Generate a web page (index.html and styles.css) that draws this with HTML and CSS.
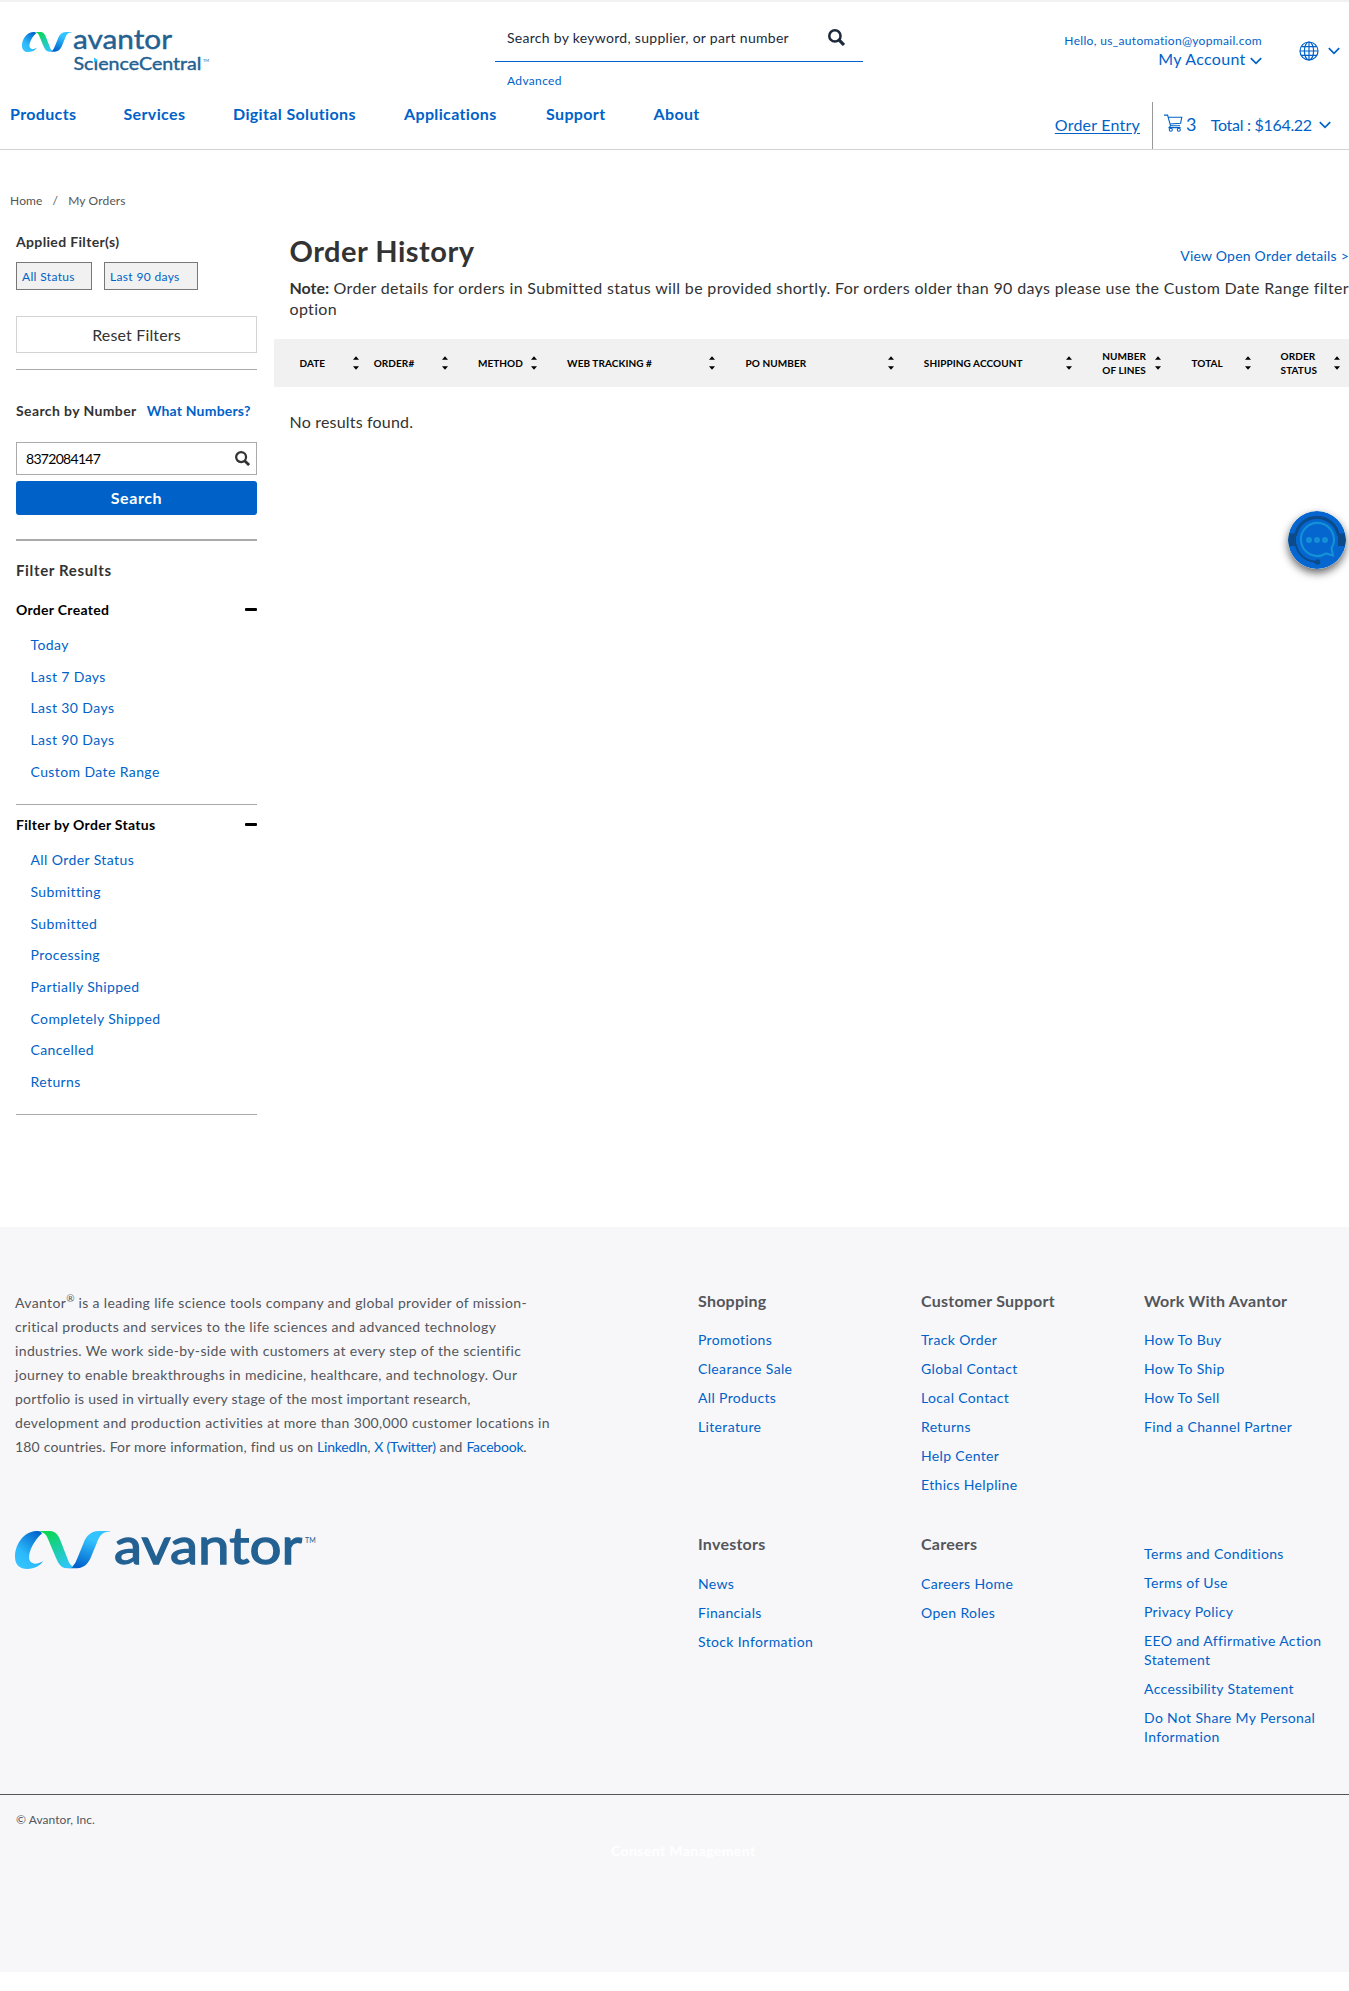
FILE: index.html
```
<!DOCTYPE html>
<html lang="en">
<head>
<meta charset="utf-8">
<title>Order History</title>
<link rel="stylesheet" href="styles.css">
</head>
<body>
<svg class="defs" width="0" height="0" aria-hidden="true">
  <defs>
    <linearGradient id="g-left" x1="0.8" y1="0" x2="0.2" y2="1"><stop offset="0" stop-color="#0062cc"/><stop offset=".65" stop-color="#2cb9fb"/><stop offset="1" stop-color="#36c6ff"/></linearGradient>
    <linearGradient id="g-mid" x1="0.2" y1="0" x2="0.8" y2="1"><stop offset=".1" stop-color="#0bd65a"/><stop offset="1" stop-color="#2fc5ff"/></linearGradient>
    <linearGradient id="g-right" x1="0.3" y1="1" x2="0.7" y2="0"><stop offset="0" stop-color="#0060cb"/><stop offset=".75" stop-color="#33c3ff"/></linearGradient>
    <symbol id="swirl" viewBox="0 0 95 38">
      <path fill="url(#g-right)" d="M95 0H84C75 0 71 6 69 11L62 28C60 33 58 36 54 37.3H62C70 37 74 31 76 26L83 9C85 4 88 1 95 .5Z"/>
      <path fill="url(#g-mid)" d="M22 0H35C41 0 44 5 46 11L53 29C54 32 56 35 58.500 35.500C57 37 54 37.300 52 37.300C45 37 43 31 41 27L33 8C31 3 29 1 22 0Z"/>
      <path fill="url(#g-left)" d="M27 2.500C26 .5 24 0 21 0C8 1 0 14 0 26C0 34 5 38 12 38C20 38 26 34 28 30C24 32.500 20 33.500 17.500 32C10 29 16 12 27 2.500Z"/>
    </symbol>
    <symbol id="chevron" viewBox="0 0 12 8"><path d="M.8 1.200 6 6.400 11.200 1.200" fill="none" stroke="currentColor" stroke-width="1.700"/></symbol>
    <symbol id="magnifier" viewBox="0 0 16 16"><circle cx="6.500" cy="6.500" r="5.300" fill="none" stroke="currentColor" stroke-width="2.400"/><path d="M10.300 10.300 15 15" stroke="currentColor" stroke-width="3"/></symbol>
    <symbol id="sort" viewBox="0 0 8 14"><path d="M1 3.800 4 .3 7 3.800ZM1 10.200 4 13.700 7 10.200Z"/></symbol>
  </defs>
</svg>

<header class="header">
  <div class="header-top">
    <svg class="logo" width="190" height="46" viewBox="0 0 190 46">
      <use href="#swirl" x="0" y="5" width="50" height="20"/>
      <g class="logo-text">
        <text x="51" y="22.300" font-size="26" textLength="99" lengthAdjust="spacingAndGlyphs">avantor</text>
        <text x="51.500" y="43" font-size="17.500" textLength="128" lengthAdjust="spacingAndGlyphs">ScıenceCentral</text>
      </g>
      <text class="logo-tm" x="181" y="34.500" font-size="4">TM</text>
      <path d="M72 30.500 76 33 72 35.500Z" fill="#2fc5ff"/>
    </svg>
    <div class="search">
      <div class="search-box"><span>Search by keyword, supplier, or part number</span><svg width="17" height="17"><use href="#magnifier"/></svg></div>
      <a class="advanced">Advanced</a>
    </div>
    <div class="account">
      <a class="hello">Hello, us_automation@yopmail.com</a>
      <a class="my-account">My Account <svg width="12" height="8"><use href="#chevron"/></svg></a>
    </div>
    <div class="locale">
      <svg width="20" height="20" viewBox="0 0 20 20" fill="none" stroke="currentColor" stroke-width="1.200"><circle cx="10" cy="10" r="9"/><ellipse cx="10" cy="10" rx="4.600" ry="9"/><path d="M10 1V19M1 10H19M2.300 5.600H17.700M2.300 14.400H17.700"/></svg>
      <svg width="12" height="8"><use href="#chevron"/></svg>
    </div>
  </div>
  <div class="header-bottom">
    <nav class="nav"><a>Products</a><a>Services</a><a>Digital Solutions</a><a>Applications</a><a>Support</a><a>About</a></nav>
    <div class="cart">
      <a class="order-entry">Order Entry</a>
      <a class="cart-link">
        <svg class="cart-icon" width="19" height="18" viewBox="0 0 19 18" fill="none" stroke="currentColor" stroke-width="1.100"><path d="M0 1.100H3.600L6.500 11.800H16M4.200 3.200H17.800L16.600 9.200 6 10M6.500 11.800 5 13.600H16.500"/><circle cx="6.800" cy="15.700" r="1.500"/><circle cx="14.800" cy="15.700" r="1.500"/></svg>
        <span class="count">3</span>
        <span class="total">Total : $164.22</span>
        <svg width="12" height="8"><use href="#chevron"/></svg>
      </a>
    </div>
  </div>
</header>

<div class="breadcrumb"><a>Home</a><span>/</span><a>My Orders</a></div>

<div class="page">
  <aside class="sidebar">
    <h4 class="label">Applied Filter(s)</h4>
    <div class="chips"><span class="chip">All Status</span><span class="chip chip-wide">Last 90 days</span></div>
    <div class="reset">Reset Filters</div>
    <div class="number-head"><span>Search by Number</span><a>What Numbers?</a></div>
    <div class="number-input"><span>8372084147</span><svg width="15" height="15"><use href="#magnifier"/></svg></div>
    <div class="search-button">Search</div>
    <h3 class="filter-title">Filter Results</h3>
    <section class="group">
      <h4 class="group-head">Order Created<i class="minus"></i></h4>
      <ul><li>Today</li><li>Last 7 Days</li><li>Last 30 Days</li><li>Last 90 Days</li><li>Custom Date Range</li></ul>
    </section>
    <section class="group group-status">
      <h4 class="group-head">Filter by Order Status<i class="minus"></i></h4>
      <ul><li>All Order Status</li><li>Submitting</li><li>Submitted</li><li>Processing</li><li>Partially Shipped</li><li>Completely Shipped</li><li>Cancelled</li><li>Returns</li></ul>
    </section>
  </aside>
  <main class="main">
    <div class="title-row"><h1>Order History</h1><a>View Open Order details &gt;</a></div>
    <p class="note"><b>Note:</b> Order details for orders in Submitted status will be provided shortly. For orders older than 90 days please use the Custom Date Range filter<br>option</p>
    <div class="table-head">
      <div>DATE<svg><use href="#sort"/></svg></div>
      <div class="tight">ORDER#<svg><use href="#sort"/></svg></div>
      <div>METHOD<svg><use href="#sort"/></svg></div>
      <div>WEB TRACKING #<svg><use href="#sort"/></svg></div>
      <div>PO NUMBER<svg><use href="#sort"/></svg></div>
      <div>SHIPPING ACCOUNT<svg><use href="#sort"/></svg></div>
      <div><span>NUMBER<br>OF LINES</span><svg><use href="#sort"/></svg></div>
      <div>TOTAL<svg><use href="#sort"/></svg></div>
      <div><span>ORDER<br>STATUS</span><svg><use href="#sort"/></svg></div>
    </div>
    <p class="empty">No results found.</p>
  </main>
</div>

<svg class="chat" width="58" height="58" viewBox="0 0 58 58">
  <circle cx="29" cy="29" r="29" fill="#0566cf"/>
  <g fill="none" stroke="#0c4a8a">
    <path d="M7.500 25C9 14 18 6.500 29 6.500S49 14 50.500 25" stroke-width="3"/>
    <path d="M7.500 33C10 44 18 50 28 51" stroke-width="2"/>
  </g>
  <path d="M1 22.500H8V35H1Q-.6 29 1 22.500ZM57 22.500H50V35H57Q58.600 29 57 22.500Z" fill="#0c4a8a"/>
  <circle cx="29.500" cy="51" r="2.700" fill="#0c4a8a"/>
  <path d="M38 42.500A16.500 16.500 0 1 1 43.500 37L45 44.500Z" fill="none" stroke="#1490d6" stroke-width="2.200"/>
  <g fill="#1490d6"><circle cx="21" cy="29" r="3"/><circle cx="29" cy="29" r="3"/><circle cx="37" cy="29" r="3"/></g>
</svg>

<footer class="footer">
  <div class="footer-grid">
    <div class="about">
      <p>Avantor<sup>®</sup> is a leading life science tools company and global provider of mission-<br>critical products and services to the life sciences and advanced technology<br>industries. We work side-by-side with customers at every step of the scientific<br>journey to enable breakthroughs in medicine, healthcare, and technology. Our<br><span class="narrow">portfolio is used in virtually every stage of the most important research,</span><br>development and production activities at more than 300,000 customer locations in<br><span class="narrower">180 countries. For more information, find us on <a>LinkedIn</a>, <a>X (Twitter)</a> and <a>Facebook</a>.</span></p>
      <svg class="footer-logo" width="305" height="40" viewBox="0 0 305 40">
        <use href="#swirl" x="0" y="0" width="95" height="38"/>
        <g class="logo-text logo-large">
          <text x="99" y="33" font-size="51" textLength="188" lengthAdjust="spacingAndGlyphs">avantor</text>
        </g>
        <text class="logo-tm" x="290" y="12" font-size="7">TM</text>
      </svg>
    </div>
    <div class="links">
      <div><h5>Shopping</h5><ul><li>Promotions</li><li>Clearance Sale</li><li>All Products</li><li>Literature</li></ul></div>
      <div><h5>Customer Support</h5><ul><li>Track Order</li><li>Global Contact</li><li>Local Contact</li><li>Returns</li><li>Help Center</li><li>Ethics Helpline</li></ul></div>
      <div><h5>Work With Avantor</h5><ul><li>How To Buy</li><li>How To Ship</li><li>How To Sell</li><li>Find a Channel Partner</li></ul></div>
      <div class="second"><h5>Investors</h5><ul><li>News</li><li>Financials</li><li>Stock Information</li></ul></div>
      <div class="second"><h5>Careers</h5><ul><li>Careers Home</li><li>Open Roles</li></ul></div>
      <div class="legal"><ul><li>Terms and Conditions</li><li>Terms of Use</li><li>Privacy Policy</li><li>EEO and Affirmative Action<br>Statement</li><li>Accessibility Statement</li><li>Do Not Share My Personal<br>Information</li></ul></div>
    </div>
  </div>
  <div class="footer-bottom">
    <p class="copyright">© Avantor, Inc.</p>
    <p class="consent">Consent Management</p>
  </div>
</footer>
</body>
</html>
```
FILE: styles.css
```
* { box-sizing: border-box; }
html { overflow: hidden; }
body {
  position: relative;
  margin: 0;
  min-height: 1991px;
  overflow: hidden;
  background: #fff;
  color: #333;
  font: 14px/20px Lato, sans-serif;
  letter-spacing: 0.34px;
  white-space: nowrap;
}
h1, h3, h4, h5, p, ul { margin: 0; padding: 0; }
ul { list-style: none; }
a { color: #0062c8; text-decoration: none; }
svg { flex: none; }
.defs { position: absolute; }

/* Header */
.header { border-top: 2px solid #f1f1f1; border-bottom: 1px solid #d3d3d3; height: 150px; color: #0062c8; }
.header-top { display: grid; grid-template-columns: 495px 368px 399px 1fr; height: 100px; }
.logo { margin: 25px 0 0 22px; overflow: visible; }
.logo-text { fill: #236192; font-family: Lato, sans-serif; letter-spacing: 0; stroke: #236192; stroke-width: 0.4; }
.logo-large { stroke-width: 1.3; }
.logo-tm { fill: #236192; letter-spacing: 0; }
.search { padding-top: 11px; }
.search-box { display: flex; justify-content: space-between; height: 49px; padding: 0 18px 0 12px; line-height: 49px; border-bottom: 1px solid #0062c8; color: #1d2a3c; letter-spacing: 0.29px; }
.search-box svg { margin-top: 16px; }
.advanced { display: block; margin: 9px 0 0 12px; font-size: 12px; }
.account { display: flex; flex-direction: column; align-items: flex-end; padding-top: 30px; }
.hello { font-size: 12px; line-height: 18px; letter-spacing: 0.32px; }
.my-account { margin-top: -1px; font-size: 16px; letter-spacing: 0.3px; }
.locale { display: flex; gap: 9px; padding: 39px 0 0 37px; }
.locale svg + svg { margin-top: 6px; }
.header-bottom { display: flex; justify-content: space-between; height: 47px; }
.nav { display: grid; grid-template-columns: 113.500px 109.500px 171px 142px 107.500px 60px; padding-left: 10px; font-size: 16px; font-weight: 700; line-height: 24px; letter-spacing: 0.36px; }
.cart { display: flex; font-size: 16px; line-height: 46px; }
.order-entry { padding-right: 12px; text-decoration: underline; text-underline-offset: 2px; letter-spacing: 0.22px; }
.cart-link { display: flex; width: 197px; padding-left: 11px; border-left: 1px solid #999; }
.cart-icon { margin-top: 12px; }
.count { margin-left: 3px; font-size: 18px; line-height: 45px; }
.total { margin: 0 7px 0 14px; letter-spacing: -0.3px; }
.total + svg { margin-top: 19px; }

/* Breadcrumb */
.breadcrumb { display: flex; gap: 10px; height: 60px; padding: 41px 0 0 10px; font-size: 12px; letter-spacing: 0.15px; color: #555; }
.breadcrumb a { color: #555; }

/* Page */
.page { display: grid; grid-template-columns: 274px 1fr; height: 1017px; }
.sidebar { padding-left: 16px; width: 257px; }
.label { margin-top: 22px; font-size: 14px; }
.chips { display: flex; gap: 12px; margin-top: 10px; }
.chip { width: 76px; height: 28px; padding-left: 5px; border: 1px solid #777; background: #f1f1f1; color: #0062c8; font-size: 12px; line-height: 27px; }
.chip-wide { width: 94px; }
.reset { height: 54px; margin-top: 26px; position: relative; text-align: center; font-size: 16px; line-height: 37px; letter-spacing: 0.15px; border-bottom: 1px solid #a9a9a9; }
.reset::before { content: ""; position: absolute; inset: 0 0 16px; border: 1px solid #d3d3d3; }
.number-head { display: flex; gap: 10px; margin-top: 31px; font-weight: 700; letter-spacing: 0.39px; }
.number-head a { letter-spacing: 0.2px; }
.number-input { display: flex; justify-content: space-between; height: 33px; margin-top: 21px; padding: 0 6px 0 9px; border: 1px solid #aaa; line-height: 32px; color: #000; letter-spacing: -0.7px; }
.number-input svg { margin-top: 8px; color: #333; }
.search-button { height: 34px; margin-top: 6px; border-radius: 3px; background: #0062c8; color: #fff; text-align: center; font-size: 16px; font-weight: 700; line-height: 34px; letter-spacing: 0.6px; }
.filter-title { margin-top: 24px; padding-top: 19px; border-top: 2px solid #aaa; font-size: 15px; letter-spacing: 0.65px; }
.group { margin-top: 20px; padding-bottom: 11px; border-bottom: 1px solid #a9a9a9; }
.group-status { margin-top: 10px; padding-bottom: 10px; }
.group-head { display: flex; justify-content: space-between; font-size: 14px; letter-spacing: 0.3px; color: #000; }
.minus { width: 12px; height: 3px; margin-top: 8px; border-radius: 1px; background: #000; }
.group ul { padding: 15px 0 0 14.500px; color: #0062c8; letter-spacing: 0.4px; }
.group li { height: 31.670px; }

/* Orders */
.title-row { display: flex; align-items: baseline; justify-content: space-between; padding: 24px 0 0 15.500px; }
.title-row h1 { font-size: 29px; line-height: 34px; letter-spacing: 0.5px; }
.title-row a { position: relative; top: -1px; letter-spacing: 0.22px; }
.note { padding: 9px 0 0 15.500px; font-size: 16px; line-height: 21px; letter-spacing: 0.33px; }
.note b { letter-spacing: 0; }
.table-head { display: grid; grid-template-columns: 89.200px 89.200px 89.200px 178.400px 178.400px 178.400px 89.200px 89.200px 89.200px; width: 1075px; height: 48px; margin-top: 20px; overflow: hidden; background: #f1f1f1; color: #000; font-size: 10px; font-weight: 700; line-height: 14px; letter-spacing: 0.08px; }
.table-head div { display: flex; align-items: center; justify-content: space-between; padding: 0 3.500px 0 25.500px; }
.table-head .tight { padding-left: 10.500px; }
.table-head svg { width: 8px; height: 14px; }
.empty { padding: 25px 0 0 15.500px; font-size: 16px; letter-spacing: 0.19px; }

.chat { position: absolute; left: 1288px; top: 511px; border-radius: 50%; box-shadow: 0 4px 9px rgba(0, 0, 0, 0.6); }

/* Footer */
.footer { height: 745px; background: #f7f7fa; color: #53565a; }
.footer-grid { display: grid; grid-template-columns: 698px 1fr; height: 567px; padding-top: 64px; }
.about { padding-left: 15px; }
.about p { line-height: 24px; letter-spacing: 0.355px; }
.about .narrow { letter-spacing: 0.27px; }
.about .narrower { letter-spacing: 0.19px; }
.about a { letter-spacing: -0.22px; }
.about sup { font-size: 10px; line-height: 0; letter-spacing: 0; }
.footer-logo { display: block; margin-top: 72px; overflow: visible; }
.links { display: grid; grid-template-columns: repeat(3, 223px); grid-template-rows: 243px auto; }
.links h5 { font-size: 16px; letter-spacing: 0.24px; margin-bottom: 14px; }
.links .second h5 { margin-bottom: 15px; }
.links ul { color: #0062c8; line-height: 19px; letter-spacing: 0.35px; }
.links li { padding: 5px 0; }
.legal { padding-top: 5px; }
.footer-bottom { padding: 15px 0 0 16px; border-top: 1px solid #53565a; }
.copyright { font-size: 12px; line-height: 20px; letter-spacing: 0.05px; }
.consent { margin: 14px 0 0 595px; line-height: 14px; color: #fff; font-weight: 700; letter-spacing: 0.41px; }
```
